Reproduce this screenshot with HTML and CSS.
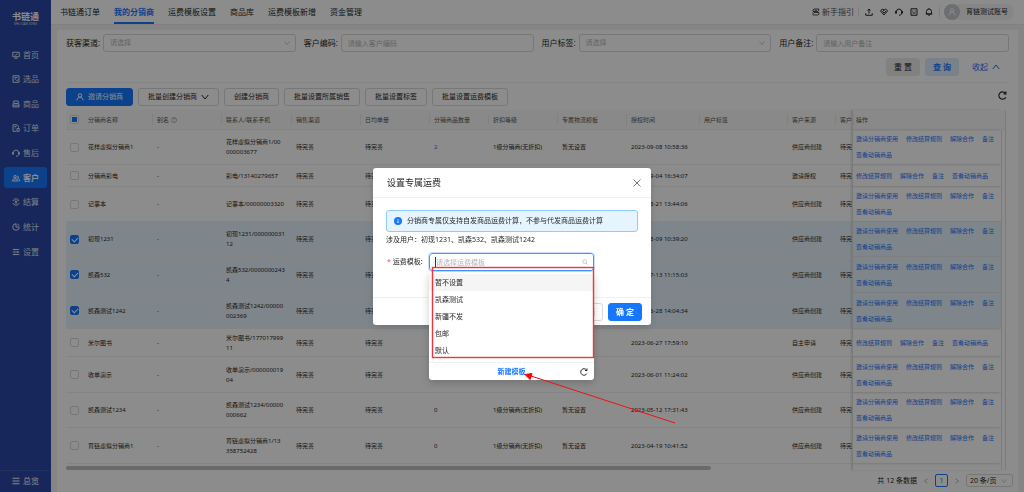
FILE: index.html
```html
<!DOCTYPE html>
<html lang="zh-CN">
<head>
<meta charset="utf-8">
<meta name="viewport" content="width=device-width, initial-scale=1">
<title>书链通 - 我的分销商</title>
<link rel="stylesheet" href="styles.css">
</head>
<body>
<svg class="sprite" aria-hidden="true">
  <symbol id="i-home" viewBox="0 0 16 16"><path d="M1.5 2.5h13v9h-13zM5 14.5h6M8 11.500v3M5 7l2 2 4-4"/></symbol>
  <symbol id="i-pick" viewBox="0 0 16 16"><path d="M2 1.500h12v13H2zM5 5h6M5 8h3M8 9.500l2 2 2-3"/></symbol>
  <symbol id="i-goods" viewBox="0 0 16 16"><path d="M3.500 2h9v5h-9zM2 7v7h12V7M2 10.500h12"/></symbol>
  <symbol id="i-order" viewBox="0 0 16 16"><path d="M9 14.500H2v-13h8l3 3v3M5 5h4M5 8h2M10 9h4.500v5.500H10z"/></symbol>
  <symbol id="i-service" viewBox="0 0 16 16"><path d="M3 10V7a5 5 0 0 1 10 0v3M3 6.500H1v4h2zM13 6.500h2v4h-2zM13 11c0 2-2 3.500-5 3.500"/></symbol>
  <symbol id="i-people" viewBox="0 0 16 16"><path d="M6 8a2.500 2.500 0 1 0 0-5 2.500 2.500 0 0 0 0 5zM1 14c0-3 2-4.500 5-4.500s5 1.500 5 4.500zM10.500 4c3 0 3 4 .5 4.500 2.500.5 4 2 4 5.500h-2"/></symbol>
  <symbol id="i-settle" viewBox="0 0 16 16"><path d="M14 6A6.300 6.300 0 0 0 3 4L1.500 6M2 10a6.300 6.300 0 0 0 11 2l1.500-2M5.500 4.500 8 7.500l2.500-3M5.500 8h5M8 7.500v4.500"/></symbol>
  <symbol id="i-stat" viewBox="0 0 16 16"><path d="M14.500 8A6.500 6.500 0 1 1 8 1.500V8zM10.500 1.800a6.500 6.500 0 0 1 3.700 3.700"/></symbol>
  <symbol id="i-set" viewBox="0 0 16 16"><path d="M1.500 3h13M1.500 8h13M1.500 13h13M5 1.500v3M11 6.500v3M5 11.500v3"/></symbol>
  <symbol id="i-menu" viewBox="0 0 16 16"><path d="M1 2.500h14M1 8h14M1 13.500h14"/></symbol>
  <symbol id="i-guide" viewBox="0 0 16 16"><path d="M4 2h10l-2 5H2V4zM4 9h10v3l-2 2H2V9M5 4.500h5"/></symbol>
  <symbol id="i-upload" viewBox="0 0 16 16"><path d="M1.500 10.500v4h13v-4M8 11V2M5 5l3-3 3 3"/></symbol>
  <symbol id="i-tag" viewBox="0 0 16 16"><path d="M1 6l3.500-4L8 4l3.500-2L15 6l-7 8zM5 7l3 3 4-4M8 4 5 7"/></symbol>
  <symbol id="i-face" viewBox="0 0 16 16"><path d="M2 1.500h12v13H2zM5.500 5v2M10.500 5v2M5 10h6"/></symbol>
  <symbol id="i-bell" viewBox="0 0 16 16"><path d="M3 12V7a5 5 0 0 1 10 0v5zM1.500 12h13M6.500 14.500h3M8 2V.5"/></symbol>
  <symbol id="i-user" viewBox="0 0 16 16"><path d="M8 8.500a3.500 3.500 0 1 0 0-7 3.500 3.500 0 0 0 0 7zM2 15c0-4 2.500-6.500 6-6.500s6 2.500 6 6.500"/></symbol>
  <symbol id="i-down" viewBox="0 0 16 16"><path d="M1.500 4 8 12l6.500-8"/></symbol>
  <symbol id="i-up" viewBox="0 0 16 16"><path d="M1.500 12 8 4l6.500 8"/></symbol>
  <symbol id="i-left" viewBox="0 0 16 16"><path d="M12 2 4 8l8 6"/></symbol>
  <symbol id="i-right" viewBox="0 0 16 16"><path d="m4 2 8 6-8 6"/></symbol>
  <symbol id="i-close" viewBox="0 0 16 16"><path d="m1 1 14 14M15 1 1 15"/></symbol>
  <symbol id="i-refresh" viewBox="0 0 16 16"><path d="M13.800 11A6.500 6.500 0 1 1 13 3.800M14 1v4h-4"/></symbol>
  <symbol id="i-search" viewBox="0 0 16 16"><path d="M7 12A5 5 0 1 0 7 2a5 5 0 0 0 0 10zM10.500 10.500 15 15"/></symbol>
  <symbol id="i-help" viewBox="0 0 16 16"><path d="M8 15A7 7 0 1 0 8 1a7 7 0 0 0 0 14zM5.500 6.200C5.500 3 10.500 3 10.500 6c0 1.700-2.500 1.700-2.500 3.500M8 11v1.500"/></symbol>
</svg>

<div class="app">
  <aside class="side">
    <div class="logo"><strong>书链通</strong><small>SHU LIAN TONG</small></div>
    <nav class="menu">
      <a href="#"><svg class="ico"><use href="#i-home"/></svg>首页</a>
      <a href="#"><svg class="ico"><use href="#i-pick"/></svg>选品</a>
      <a href="#"><svg class="ico"><use href="#i-goods"/></svg>商品</a>
      <a href="#"><svg class="ico"><use href="#i-order"/></svg>订单</a>
      <a href="#"><svg class="ico"><use href="#i-service"/></svg>售后</a>
      <a href="#" class="active" aria-current="page"><svg class="ico"><use href="#i-people"/></svg>客户</a>
      <a href="#"><svg class="ico"><use href="#i-settle"/></svg>结算</a>
      <a href="#"><svg class="ico"><use href="#i-stat"/></svg>统计</a>
      <a href="#"><svg class="ico"><use href="#i-set"/></svg>设置</a>
    </nav>
    <a href="#" class="overview"><svg class="ico"><use href="#i-menu"/></svg>总览</a>
  </aside>

  <div class="main">
    <header class="top">
      <nav class="tabs">
        <a href="#">书链通订单</a>
        <a href="#" class="active">我的分销商</a>
        <a href="#">运费模板设置</a>
        <a href="#">商品库</a>
        <a href="#">运费模板新增</a>
        <a href="#">资金管理</a>
      </nav>
      <div class="tools">
        <a href="#" class="guide"><svg class="ico"><use href="#i-guide"/></svg>新手指引</a>
        <div class="icons">
          <button type="button" aria-label="上传"><svg class="ico"><use href="#i-upload"/></svg></button>
          <button type="button" aria-label="合作"><svg class="ico"><use href="#i-tag"/></svg></button>
          <button type="button" aria-label="客服"><svg class="ico"><use href="#i-service"/></svg></button>
          <button type="button" aria-label="反馈"><svg class="ico"><use href="#i-face"/></svg></button>
          <button type="button" aria-label="通知"><svg class="ico"><use href="#i-bell"/></svg></button>
        </div>
        <button type="button" class="account"><span class="avatar"><svg class="ico"><use href="#i-user"/></svg></span>育链测试账号</button>
      </div>
    </header>

    <main class="card">
      <form class="filters">
        <div class="field">
          <label for="channel">获客渠道:</label>
          <div class="control"><select id="channel"><option>请选择</option></select><svg class="ico"><use href="#i-down"/></svg></div>
        </div>
        <div class="field">
          <label for="code">客户编码:</label>
          <div class="control"><input id="code" type="text" placeholder="请输入客户编码"></div>
        </div>
        <div class="field">
          <label for="tag">用户标签:</label>
          <div class="control"><select id="tag"><option>请选择</option></select><svg class="ico"><use href="#i-down"/></svg></div>
        </div>
        <div class="field">
          <label for="note">用户备注:</label>
          <div class="control"><input id="note" type="text" placeholder="请输入用户备注"></div>
        </div>
        <div class="submit">
          <button type="button" class="btn reset">重 置</button>
          <button type="button" class="btn query">查 询</button>
          <button type="button" class="fold">收起<svg class="ico"><use href="#i-up"/></svg></button>
        </div>
      </form>

      <div class="actions">
        <button type="button" class="btn primary"><svg class="ico"><use href="#i-user"/></svg>邀请分销商</button>
        <button type="button" class="btn">批量创建分销商<svg class="ico"><use href="#i-down"/></svg></button>
        <button type="button" class="btn">创建分销商</button>
        <button type="button" class="btn">批量设置所属销售</button>
        <button type="button" class="btn">批量设置标签</button>
        <button type="button" class="btn">批量设置运费模板</button>
        <button type="button" class="refresh" aria-label="刷新"><svg class="ico"><use href="#i-refresh"/></svg></button>
      </div>

      <table class="grid">
        <colgroup>
          <col class="w-check"><col class="w-mid"><col class="w-mid"><col class="w-contact"><col class="w-mid"><col class="w-mid"><col class="w-goods"><col class="w-mid"><col class="w-mid"><col class="w-time"><col class="w-tag"><col class="w-source"><col class="w-client"><col class="w-op"><col class="w-gutter">
        </colgroup>
        <thead>
          <tr>
            <th class="check"><input type="checkbox" class="some" aria-label="全选"></th>
            <th class="nodiv">分销商名称</th><th>别名 <svg class="ico"><use href="#i-help"/></svg></th><th>联系人/联系手机</th><th>销售渠道</th><th>日均单量</th><th>分销商品数量</th><th>折扣等级</th><th>专属物流模板</th><th>授权时间</th><th>用户标签</th><th>客户来源</th><th>客户</th><th class="op">操作</th><th class="gutter"></th>
          </tr>
        </thead>
        <tbody id="rows"></tbody>
      </table>

      <footer class="pager">
        <span>共 12 条数据</span>
        <button type="button" class="arrow" aria-label="上一页"><svg class="ico"><use href="#i-left"/></svg></button>
        <button type="button" class="page">1</button>
        <button type="button" class="arrow" aria-label="下一页"><svg class="ico"><use href="#i-right"/></svg></button>
        <div class="control size"><select aria-label="每页条数"><option>20 条/页</option></select><svg class="ico"><use href="#i-down"/></svg></div>
      </footer>
    </main>
  </div>
</div>

<div class="mask">
  <section class="modal" role="dialog" aria-labelledby="dlg-title">
    <header class="modal-head">
      <h2 id="dlg-title">设置专属运费</h2>
      <button type="button" aria-label="关闭"><svg class="ico"><use href="#i-close"/></svg></button>
    </header>
    <div class="modal-body">
      <p class="alert"><svg class="info" viewBox="0 0 16 16"><circle cx="8" cy="8" r="8"/><path d="M8 7v5M8 4v1.500"/></svg>分销商专属仅支持自发商品运费计算，不参与代发商品运费计算</p>
      <p class="users">涉及用户：初现1231、凯森532、凯森测试1242</p>
      <div class="freight">
        <label for="tpl"><span class="star">*</span>运费模板:</label>
        <div class="combo">
          <input id="tpl" type="text" role="combobox" aria-expanded="true" aria-controls="tpl-list" placeholder="请选择运费模板">
          <svg class="ico"><use href="#i-search"/></svg>
          <span class="caret"></span>
          <div class="dropdown">
            <ul id="tpl-list" role="listbox">
              <li role="option" class="hover">暂不设置</li>
              <li role="option">凯森测试</li>
              <li role="option">新疆不发</li>
              <li role="option">包邮</li>
              <li role="option">默认</li>
            </ul>
            <div class="drop-foot">
              <a href="#">新建模板</a>
              <button type="button" aria-label="刷新模板"><svg class="ico"><use href="#i-refresh"/></svg></button>
            </div>
            <svg class="marks" viewBox="0 0 250 160" aria-hidden="true">
              <rect x="3.500" y="3.500" width="161" height="90"/>
              <path class="line" d="M246 159 102 112"/>
              <path class="head" d="M96 110.500 103 109.500l-2 6z"/>
            </svg>
          </div>
        </div>
      </div>
    </div>
    <footer class="modal-foot">
      <button type="button" class="btn">取 消</button>
      <button type="button" class="btn primary">确 定</button>
    </footer>
  </section>
</div>
<script src="rows.js"></script>
</body>
</html>
```

FILE: rows.js
```js
const rows = [
  { name: '花样虚拟分销商1', contact: ['花样虚拟分销商1/00', '000003677'], goods: '2', link: true, time: '2023-09-08 10:58:36', source: '供应商创建', size: 'tall' },
  { name: '分销商彩电', contact: ['彩电/13140279657'], goods: '0', time: '2023-09-04 16:34:07', source: '邀请授权', size: 'short' },
  { name: '记事本', contact: ['记事本/00000003320'], goods: '0', time: '2023-08-21 13:44:06', source: '供应商创建', size: 'tall' },
  { name: '初现1231', contact: ['初现1231/000000031', '12'], goods: '0', time: '2023-08-09 10:39:20', source: '供应商创建', size: 'tall', on: true },
  { name: '凯森532', contact: ['凯森532/0000000243', '4'], goods: '0', time: '2023-07-13 11:15:03', source: '供应商创建', size: 'taller', on: true },
  { name: '凯森测试1242', contact: ['凯森测试1242/00000', '002369'], goods: '0', time: '2023-06-28 14:04:34', source: '供应商创建', size: 'taller', on: true },
  { name: '米尔图书', contact: ['米尔图书/177017999', '11'], goods: '0', time: '2023-06-27 17:59:10', source: '自主申请', size: 'middle' },
  { name: '收单演示', contact: ['收单演示/000000019', '04'], goods: '0', time: '2023-06-01 11:24:02', source: '供应商创建', size: 'taller' },
  { name: '凯森测试1234', contact: ['凯森测试1234/00000', '000662'], goods: '0', time: '2023-05-12 17:31:43', source: '供应商创建', size: 'tall' },
  { name: '育链虚拟分销商1', contact: ['育链虚拟分销商1/13', '358752428'], goods: '0', time: '2023-04-19 10:41:52', source: '供应商创建', size: 'taller' }
];

const full = ['邀请分销商使用', '修改结算规则', '解除合作', '备注', '查看动销商品'];

document.getElementById('rows').innerHTML = rows.map(r => {
  const ops = r.size === 'short' || r.size === 'middle' ? full.slice(1) : full;
  return `<tr class="${r.size}${r.on ? ' on' : ''}">
    <td class="check"><input type="checkbox" aria-label="选择${r.name}"${r.on ? ' checked' : ''}></td>
    <td>${r.name}</td><td>-</td><td>${r.contact.join('<br>')}</td>
    <td>待完善</td><td>待完善</td><td>${r.link ? `<a href="#">${r.goods}</a>` : r.goods}</td>
    <td>1级分销商(无折扣)</td><td>暂无设置</td><td>${r.time}</td><td></td>
    <td>${r.source}</td><td>待完善</td>
    <td class="op"><div class="links">${ops.map(o => `<a href="#">${o}</a>`).join('')}</div></td>
    <td class="gutter"></td></tr>`;
}).join('') + '<tr class="rail"><td colspan="13"><div class="thumb"></div></td><td class="op"></td><td class="gutter"></td></tr>';
```

FILE: styles.css
```css
* { box-sizing: border-box; }

body {
  margin: 0;
  font: 8px/12px "Noto Sans", "Noto Sans CJK SC", sans-serif;
  color: #262626;
  background: #f3f3f4;
  overflow: hidden;
}

a { color: inherit; text-decoration: none; }
p, h2, ul { margin: 0; padding: 0; list-style: none; font-weight: 400; }

button, input, select { font: inherit; color: inherit; margin: 0; }
button { padding: 0; border: 0; background: none; white-space: nowrap; }

.sprite { display: none; }

.ico {
  width: 8px;
  height: 8px;
  flex: none;
  fill: none;
  stroke: currentColor;
  stroke-width: 2;
}

.app { display: flex; min-height: 100vh; }

/* Sidebar */
.side {
  width: 51px;
  flex: none;
  display: flex;
  flex-direction: column;
  background: #2b48a6;
  color: #dbe1f4;
}

.logo {
  height: 44px;
  padding-top: 11px;
  display: flex;
  flex-direction: column;
  align-items: center;
}
.logo strong { font-size: 9px; line-height: 11px; color: #fff; }
.logo small { font-size: 3px; line-height: 4px; }

.menu {
  height: 218px;
  padding: 0 4px;
  display: flex;
  flex-direction: column;
  justify-content: space-between;
}
.menu a, .overview {
  height: 21px;
  padding-left: 8px;
  display: flex;
  align-items: center;
  gap: 3px;
}
.menu .active { background: #1677ff; color: #fff; border-radius: 3px; font-weight: 700; }
.overview {
  height: 22px;
  margin-top: auto;
  padding: 0 0 2px 12px;
  border-top: 1px solid #3c57b2;
  color: #fff;
}

/* Top bar */
.main { flex: 1; min-width: 0; display: flex; flex-direction: column; }

.top {
  height: 25px;
  padding: 0 10px 0 9px;
  display: flex;
  justify-content: space-between;
  background: #fff;
  border-bottom: 1px solid #ececec;
}
.tabs { display: flex; gap: 14px; }
.tabs a { line-height: 24px; white-space: nowrap; }
.tabs .active { color: #1677ff; font-weight: 700; border-bottom: 2px solid #1677ff; }

.tools { display: flex; align-items: center; }
.guide { display: flex; align-items: center; gap: 2px; color: #555; }
.icons {
  display: flex;
  gap: 7px;
  margin: 0 4px;
  padding: 0 6px;
  border: solid #e4e4e4;
  border-width: 0 1px;
}
.icons button { display: flex; padding: 1px 0; }
.account {
  display: flex;
  align-items: center;
  gap: 6px;
  padding-right: 6px;
  border-radius: 8px;
  background: #f5f5f5;
  font-size: 7px;
}
.avatar {
  width: 16px;
  height: 16px;
  display: grid;
  place-items: center;
  border-radius: 50%;
  background: #c6c9ce;
  color: #fff;
}

/* Content card */
.card {
  flex: 1;
  margin: 5px 6px 0;
  padding: 4px 9px 0;
  display: flex;
  flex-direction: column;
  background: #fff;
}

.filters {
  display: grid;
  grid-template-columns: repeat(4, 1fr);
  gap: 6px 8px;
  padding-bottom: 6px;
  border-bottom: 1px solid #f0f0f0;
}
.field { display: flex; align-items: center; }
.field label { width: 37px; flex: none; }
.control { position: relative; flex: 1; min-width: 0; }
.control input, .control select {
  display: block;
  width: 100%;
  height: 18px;
  padding: 0 6px;
  border: 1px solid #d9d9d9;
  border-radius: 3px;
  background: #fff;
  color: #b5b5b5;
  font-size: 7px;
  appearance: none;
}
.control .ico {
  position: absolute;
  right: 6px;
  top: 50%;
  width: 6px;
  height: 6px;
  margin-top: -3px;
  color: #b5b5b5;
}
::placeholder { color: #b5b5b5; opacity: 1; }

.submit { grid-column: 1 / -1; display: flex; justify-content: flex-end; gap: 5px; }

.btn {
  height: 18px;
  padding: 0 9px;
  display: flex;
  align-items: center;
  justify-content: center;
  gap: 4px;
  border: 1px solid #d9d9d9;
  border-radius: 3px;
  background: #fff;
  font-size: 7px;
}
.btn.primary { background: #1677ff; border-color: #1677ff; color: #fff; }
.reset, .query, .modal-foot .btn { width: 34px; padding: 0; font-size: 8px; }
.btn.reset { background: #ececec; border-color: #ececec; }
.btn.query { background: #dcecfb; border-color: #dcecfb; color: #1677ff; font-weight: 700; }
.fold { display: flex; align-items: center; gap: 4px; padding: 0 9px 0 8px; color: #1677ff; }

.actions { display: flex; gap: 5px; padding: 5px 0 4px; }
.actions .refresh { margin-left: auto; padding-right: 2px; }
.refresh .ico { width: 9px; height: 9px; }

/* Table */
.grid {
  width: calc(100% - 4px);
  table-layout: fixed;
  border-collapse: separate;
  border-spacing: 0;
  border-right: 1px solid #e0e0e0;
  font-size: 6px;
  line-height: 10px;
}
.w-check, .w-client { width: 17px; }
.w-mid { width: 69px; }
.w-contact { width: 70px; }
.w-goods { width: 59px; }
.w-time { width: 73px; }
.w-tag { width: 88px; }
.w-source { width: 48px; }
.w-op { width: 149px; }
.w-gutter { width: 4px; }

.grid th, .grid td {
  padding: 0 0 0 5px;
  text-align: left;
  white-space: nowrap;
  overflow: hidden;
  border-bottom: 1px solid #f0f0f0;
}
.grid th {
  height: 20px;
  font-weight: 400;
  color: #555;
  background: linear-gradient(#ececec, #ececec) left center / 1px 11px no-repeat #fafafa;
}
.grid th.check, .grid th.nodiv, .grid th.gutter { background: #fafafa; }
.grid th .ico { width: 6px; height: 6px; vertical-align: -1px; stroke-width: 1; }
.grid .check { padding-left: 4px; }
.grid td a { color: #1677ff; }
.grid .op { padding-left: 3px; border-left: 1px solid #dcdcdc; box-shadow: -1px 0 2px rgba(0, 0, 0, .12); }
.grid .gutter { padding: 0; }
.grid td.gutter { border-left: 1px solid #e0e0e0; border-bottom: 0; background: #fff; }
.tall { height: 35px; }
.taller { height: 36px; }
.short { height: 22px; }
.middle { height: 28px; }
.on td { background: #e6f4ff; }
.links { display: flex; flex-wrap: wrap; column-gap: 8px; line-height: 16px; }

.grid input {
  display: grid;
  place-items: center;
  width: 9px;
  height: 9px;
  appearance: none;
  border: 1px solid #d9d9d9;
  border-radius: 2px;
  background: #fff;
}
.grid input:checked { background: #1677ff; border-color: #1677ff; }
.grid input:checked::after {
  content: "";
  width: 3px;
  height: 5px;
  margin-bottom: 2px;
  border: solid #fff;
  border-width: 0 1px 1px 0;
  transform: rotate(45deg);
}
.grid .some::after { content: ""; width: 5px; height: 5px; background: #1677ff; }

.rail { height: 6px; line-height: 0; }
.grid .rail td { padding: 0; border-bottom: 0; }
.thumb { width: 82%; height: 4px; margin-top: 2px; border-radius: 2px; background: #c1c1c1; }

.pager {
  display: flex;
  align-items: center;
  justify-content: flex-end;
  gap: 5px;
  margin: 4px -4px 4px 0;
  font-size: 7px;
}
.pager .arrow { display: flex; padding: 0 1px; color: #a0a0a0; }
.pager .arrow .ico { width: 6px; height: 6px; }
.page { width: 13px; height: 13px; border: 1px solid #1677ff; border-radius: 2px; color: #1677ff; line-height: 11px; }
.control.size { flex: none; width: 47px; }
.control.size select { height: 13px; padding: 0 3px; color: #262626; line-height: 11px; }

/* Dialog */
.mask {
  position: fixed;
  inset: 0;
  display: flex;
  justify-content: center;
  align-items: flex-start;
  padding-top: 168px;
  background: rgba(0, 0, 0, .45);
}
.modal {
  width: 278px;
  border-radius: 3px;
  background: #fff;
  box-shadow: 0 2px 8px rgba(0, 0, 0, .15);
  font-size: 7px;
}
.modal-head {
  height: 30px;
  padding: 0 10px 0 14px;
  display: flex;
  align-items: center;
  justify-content: space-between;
  border-bottom: 1px solid #f0f0f0;
}
.modal-head h2 { font-size: 9px; line-height: 12px; }
.modal-head button { display: flex; color: #777; }
.modal-head .ico { stroke-width: 2; }
.modal-body { padding: 12px 13px 26px; }
.alert {
  height: 22px;
  padding-left: 7px;
  display: flex;
  align-items: center;
  gap: 5px;
  border: 1px solid #91caff;
  border-radius: 3px;
  background: #e6f4ff;
}
.info { width: 8px; height: 8px; fill: #1677ff; stroke: #fff; stroke-width: 2; }
.info circle { stroke: none; }
.users { padding: 2px 0 7px; }
.freight { display: flex; align-items: center; }
.freight label { width: 43px; flex: none; }
.star { margin: 0 2px 0 1px; color: #ff4d4f; }
.combo { position: relative; width: 165px; }
.combo input {
  display: block;
  width: 100%;
  height: 18px;
  padding: 0 6px;
  border: 1px solid #4096ff;
  border-radius: 3px;
  outline: 1px solid #c5deff;
  background: #fff;
}
.combo > .ico { position: absolute; right: 6px; top: 6px; width: 6px; height: 6px; color: #bbb; }
.caret { position: absolute; left: 6px; top: 4px; width: 1px; height: 10px; background: #333; }
.dropdown {
  position: absolute;
  top: 19px;
  left: 0;
  width: 100%;
  padding-top: 2px;
  border-radius: 3px;
  background: #fff;
  box-shadow: 0 3px 8px rgba(0, 0, 0, .2);
}
.dropdown li { padding-left: 6px; line-height: 17px; }
.dropdown .hover { background: #f5f5f5; }
.drop-foot {
  display: grid;
  grid-template-columns: 1fr auto 1fr;
  align-items: center;
  height: 18px;
  margin-top: 3px;
  border-top: 1px solid #f0f0f0;
}
.drop-foot a { grid-column: 2; color: #1677ff; font-weight: 700; }
.drop-foot button { display: flex; justify-self: end; padding-right: 6px; }
.marks {
  position: absolute;
  left: 0;
  top: -8px;
  width: 250px;
  height: 160px;
  fill: none;
  stroke: #f5333a;
  stroke-width: 1.4;
  pointer-events: none;
}
.marks .line { stroke: #ee1111; stroke-width: 1; }
.marks .head { fill: #f00; stroke: #f00; stroke-width: 1; }
.modal-foot {
  height: 28px;
  padding: 0 9px;
  display: flex;
  align-items: center;
  justify-content: flex-end;
  gap: 5px;
  border-top: 1px solid #f0f0f0;
}
.modal-foot .primary { font-weight: 700; }
```
